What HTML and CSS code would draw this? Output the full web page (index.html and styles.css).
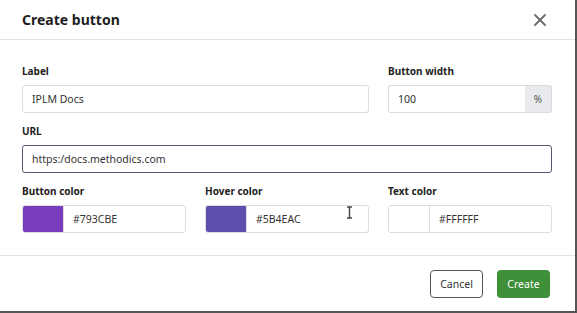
FILE: index.html
```html
<!DOCTYPE html>
<html lang="en">
<head>
    <meta charset="UTF-8">
    <meta name="viewport" content="width=device-width, initial-scale=1.0">
    <title>Create button</title>
    <link rel="stylesheet" href="styles.css">
</head>
<body>
    <div class="modal">
        <!-- Header -->
        <div class="modal-header">
            <h2>Create button</h2>
            <span class="close-btn">
                <svg width="12" height="12" viewBox="0 0 12 12"><path d="M1 1L11 11M11 1L1 11" stroke="#6a6a6a" stroke-width="1.8" stroke-linecap="round"/></svg>
            </span>
        </div>

        <!-- Form -->
        <div class="modal-body">
            <div class="field span-2">
                <label>Label</label>
                <input class="text-input" type="text" value="IPLM Docs">
            </div>
            <div class="field">
                <label>Button width</label>
                <div class="addon-group">
                    <input class="text-input" type="text" value="100">
                    <span class="addon">%</span>
                </div>
            </div>

            <div class="field span-3">
                <label>URL</label>
                <input class="text-input focused" type="text" value="https:/docs.methodics.com">
            </div>

            <div class="field">
                <label>Button color</label>
                <div class="color-input">
                    <span class="swatch swatch-button"></span>
                    <span class="hex">#793CBE</span>
                </div>
            </div>
            <div class="field">
                <label>Hover color</label>
                <div class="color-input">
                    <span class="swatch swatch-hover"></span>
                    <span class="hex">#5B4EAC</span>
                    <svg class="cursor" width="7" height="13" viewBox="0 0 7 13"><path d="M1 1H6M3.5 1V12M1 12H6" stroke="#444" stroke-width="1.4" fill="none"/></svg>
                </div>
            </div>
            <div class="field">
                <label>Text color</label>
                <div class="color-input">
                    <span class="swatch swatch-text"></span>
                    <span class="hex">#FFFFFF</span>
                </div>
            </div>
        </div>

        <!-- Footer -->
        <div class="modal-footer">
            <button class="btn btn-cancel">Cancel</button>
            <button class="btn btn-create">Create</button>
        </div>
    </div>
</body>
</html>
```

FILE: styles.css
```css
body {
    font-family: "Source Sans Pro", "Noto Sans", Arial, sans-serif;
    background-color: #fff;
    margin: 0;
    padding: 0;
    color: #222;
}
.modal {
    width: 575px;
    height: 311px;
    background: white;
    border-right: 2px solid #555;
    border-bottom: 2px solid #555;
    display: flex;
    flex-direction: column;
}
.modal-header {
    height: 40px;
    box-sizing: border-box;
    border-bottom: 1px solid #e2e2e2;
    display: flex;
    align-items: center;
    justify-content: space-between;
    padding: 0 29px 0 22px;
}
.modal-header h2 {
    margin: 0;
    font-size: 14px;
    font-weight: 700;
    color: #1e1e1e;
}
.close-btn {
    display: flex;
    cursor: pointer;
}
.modal-body {
    flex: 1;
    display: grid;
    grid-template-columns: repeat(3, 1fr);
    column-gap: 19px;
    row-gap: 11px;
    padding: 24px 23px 0 22px;
    align-content: start;
}
.field {
    display: flex;
    flex-direction: column;
    gap: 6px;
    position: relative;
}
.span-2 {
    grid-column: span 2;
}
.span-3 {
    grid-column: span 3;
}
.field label {
    font-size: 10px;
    font-weight: 700;
    line-height: 15px;
    color: #222;
}
.text-input {
    height: 28px;
    box-sizing: border-box;
    border: 1px solid #dcdcdc;
    border-radius: 3px;
    padding: 0 9px;
    font-family: inherit;
    font-size: 10.5px;
    color: #333;
    outline: none;
    width: 100%;
}
.text-input.focused {
    border-color: #5d5570;
}
.addon-group {
    display: flex;
}
.addon-group .text-input {
    border-radius: 3px 0 0 3px;
    border-right: none;
}
.addon {
    width: 26px;
    flex-shrink: 0;
    background: #e9eaee;
    border: 1px solid #dcdcdc;
    border-left: none;
    border-radius: 0 3px 3px 0;
    display: flex;
    align-items: center;
    justify-content: center;
    font-size: 10px;
    color: #555;
}
.color-input {
    height: 28px;
    box-sizing: border-box;
    border: 1px solid #dcdcdc;
    border-radius: 3px;
    display: flex;
    align-items: center;
    overflow: hidden;
    position: relative;
}
.swatch {
    width: 40px;
    height: 100%;
    border-right: 1px solid #dcdcdc;
    flex-shrink: 0;
}
.swatch-button {
    background: #793cbe;
}
.swatch-hover {
    background: #5b4eac;
}
.swatch-text {
    background: #fff;
}
.hex {
    padding-left: 9px;
    font-size: 10.5px;
    color: #333;
}
.cursor {
    position: absolute;
    right: 15px;
    top: 0;
}
.modal-footer {
    height: 56px;
    box-sizing: border-box;
    border-top: 1px solid #e2e2e2;
    display: flex;
    align-items: center;
    justify-content: flex-end;
    gap: 14px;
    padding: 0 25px 0 0;
}
.btn {
    height: 28px;
    width: 53px;
    border-radius: 4px;
    font-family: inherit;
    font-size: 10.5px;
    cursor: pointer;
}
.btn-cancel {
    background: white;
    border: 1px solid #555;
    color: #333;
}
.btn-create {
    background: #3f8f39;
    border: none;
    color: white;
}
```
